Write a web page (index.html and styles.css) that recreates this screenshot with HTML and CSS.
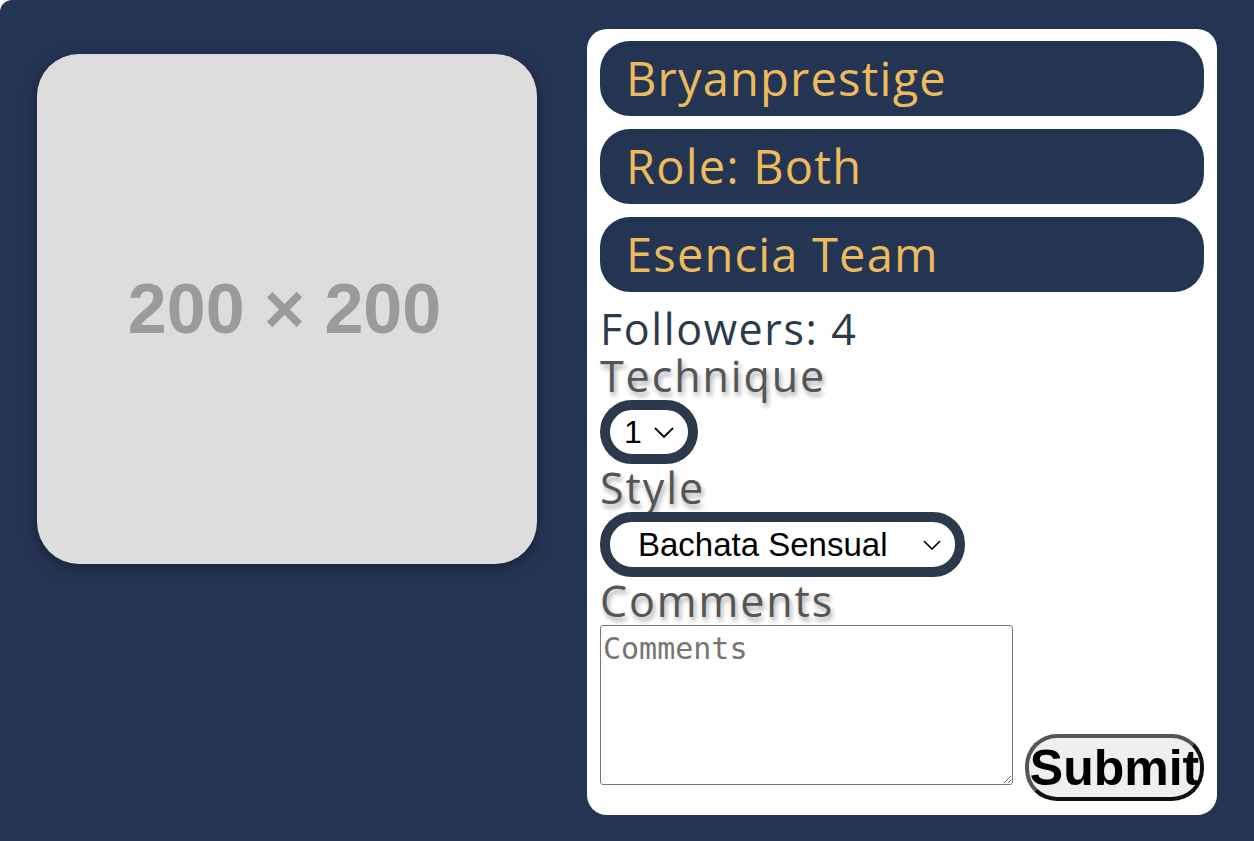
FILE: index.html
```html
<!DOCTYPE html>
<html>
<head>
<meta charset="utf-8">
<link rel="stylesheet" href="styles.css">
</head>
<body>
<div class="page">
  <div class="photo"><span class="photo-text">200 × 200</span></div>
  <form class="card">
    <div class="pill">Bryanprestige</div>
    <div class="pill">Role: Both</div>
    <div class="pill">Esencia Team</div>
    <div class="followers">Followers: 4</div>
    <label class="label">Technique</label>
    <div class="select-row">
      <select class="select select-small">
        <option>1</option>
      </select>
    </div>
    <label class="label">Style</label>
    <div class="select-row">
      <select class="select select-wide">
        <option>Bachata Sensual</option>
      </select>
    </div>
    <label class="label">Comments</label>
    <div class="bottom-row">
      <textarea class="comments" placeholder="Comments"></textarea>
      <button type="button" class="submit">Submit</button>
    </div>
  </form>
</div>
</body>
</html>
```
FILE: styles.css
```css
html, body {
  margin: 0;
  padding: 0;
  background: #ffffff;
}
.page {
  background: #243453;
  border-top-left-radius: 12px;
  min-height: 841px;
  box-sizing: border-box;
  display: flex;
  align-items: flex-start;
  padding-top: 29px;
}
.photo {
  width: 500px;
  height: 510px;
  margin: 25px 50px 0 37px;
  background: #dddddd;
  border-radius: 42px;
  box-shadow: 0 4px 14px rgba(0, 0, 0, 0.35);
  display: flex;
  align-items: center;
  justify-content: center;
  flex-shrink: 0;
}
.photo-text {
  font-family: "Liberation Sans", Arial, sans-serif;
  font-weight: bold;
  font-size: 70px;
  color: #9b9b9b;
  margin-left: -5px;
}
.card {
  width: 630px;
  height: 786px;
  box-sizing: border-box;
  background: #ffffff;
  border-radius: 20px;
  padding: 12px 13px 13px 13px;
  display: flex;
  flex-direction: column;
  align-items: flex-start;
  margin: 0;
}
.pill {
  align-self: stretch;
  height: 75px;
  box-sizing: border-box;
  background: #243453;
  border-radius: 30px;
  color: #edbb5b;
  font-family: "Open Sans", sans-serif;
  font-weight: 500;
  font-size: 47px;
  line-height: 75px;
  padding-left: 26px;
  margin-bottom: 13px;
  letter-spacing: 1.2px;
}
.followers {
  font-family: "Open Sans", sans-serif;
  font-weight: 500;
  font-size: 43px;
  line-height: 47px;
  letter-spacing: 1.6px;
  color: #2b3a4a;
}
.label {
  font-family: "Open Sans", sans-serif;
  font-weight: 500;
  font-size: 43px;
  line-height: 48px;
  letter-spacing: 1.9px;
  color: #555555;
  text-shadow: 2px 4px 5px rgba(0, 0, 0, 0.35);
}
.select-row {
  display: flex;
}
.select {
  appearance: none;
  -webkit-appearance: none;
  font-family: "Liberation Sans", Arial, sans-serif;
  font-size: 32px;
  color: #000;
  background: #ffffff url("data:image/svg+xml,%3Csvg xmlns='http://www.w3.org/2000/svg' width='20' height='11' viewBox='0 0 20 11'%3E%3Cpath d='M1 1l9 9 9-9' fill='none' stroke='%23000' stroke-width='1.8'/%3E%3C/svg%3E") no-repeat right 14px center;
  border: 10px solid #2b3a4a;
  border-radius: 32px;
  box-sizing: border-box;
  height: 64px;
  padding: 0 40px 0 14px;
  margin: 0;
}
.select-small {
  width: 98px;
}
.select-wide {
  width: 365px;
  height: 65px;
  font-size: 33px;
  padding-left: 28px;
  background-size: 18px 10px;
}
.bottom-row {
  display: flex;
  align-items: flex-end;
  gap: 12px;
}
.comments {
  width: 413px;
  height: 160px;
  box-sizing: border-box;
  border: 1px solid #767676;
  border-radius: 3px;
  font-family: "DejaVu Sans Mono", monospace;
  font-size: 30px;
  padding: 5px 2px 2px 2px;
  margin: 0 0 16px 0;
  resize: both;
}
.comments::placeholder {
  color: #757575;
}
.submit {
  width: 179px;
  height: 67px;
  box-sizing: border-box;
  background: #efefef;
  border: 4px solid;
  border-color: #555555 #111111 #111111 #555555;
  border-radius: 32px;
  font-family: "Liberation Sans", Arial, sans-serif;
  font-weight: bold;
  font-size: 50px;
  color: #000;
  padding: 0;
  display: flex;
  align-items: center;
  justify-content: center;
  overflow: visible;
  white-space: nowrap;
}
```
